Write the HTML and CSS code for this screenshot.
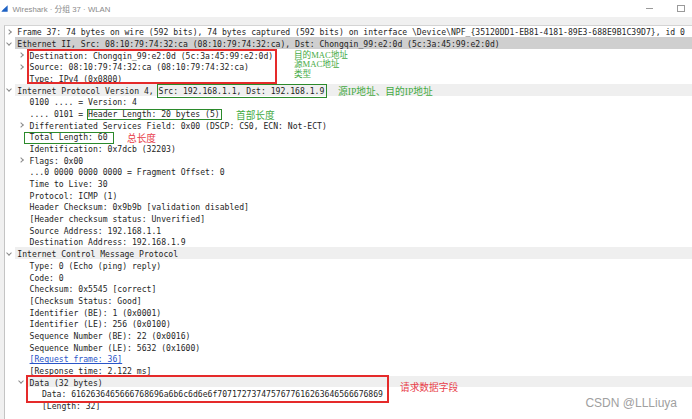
FILE: index.html
```html
<!DOCTYPE html>
<html lang="zh-CN">
<head>
  <meta charset="UTF-8" />
  <meta name="viewport" content="width=device-width, initial-scale=1.0"/>
  <title>Wireshark · 分组 37 · WLAN</title>
  <link rel="stylesheet" href="styles.css">
</head>
<body>
  <div class="titlebar">
    <svg class="logo" viewBox="0 0 10 10"><path d="M0.5 9.5 C3 7 6 3.5 9.5 0.5 L9.5 9.5 Z" fill="#1e62c4"/></svg>
    <span class="title">Wireshark · 分组 37 · WLAN</span>
    <span class="controls"><span class="min"></span><span class="max"></span></span>
  </div>
  <div class="gap"></div>

  <div class="tree">
    <div class="row closed"><span class="tw"></span><span class="label">Frame 37: 74 bytes on wire (592 bits), 74 bytes captured (592 bits) on interface \Device\NPF_{35120DD1-EB81-4181-89E3-688E9B1C39D7}, id 0</span></div>
    <div class="row open sel"><span class="tw"></span><span class="label">Ethernet II, Src: 08:10:79:74:32:ca (08:10:79:74:32:ca), Dst: Chongqin_99:e2:0d (5c:3a:45:99:e2:0d)</span></div>
    <div class="row l1 closed"><span class="tw"></span><span class="label">Destination: Chongqin_99:e2:0d (5c:3a:45:99:e2:0d)</span></div>
    <div class="row l1 closed"><span class="tw"></span><span class="label">Source: 08:10:79:74:32:ca (08:10:79:74:32:ca)</span></div>
    <div class="row l1"><span class="tw"></span><span class="label">Type: IPv4 (0x0800)</span></div>
    <div class="row open hi"><span class="tw"></span><span class="label">Internet Protocol Version 4, Src: 192.168.1.1, Dst: 192.168.1.9</span></div>
    <div class="row l1"><span class="tw"></span><span class="label">0100 .... = Version: 4</span></div>
    <div class="row l1"><span class="tw"></span><span class="label">.... 0101 = Header Length: 20 bytes (5)</span></div>
    <div class="row l1 closed"><span class="tw"></span><span class="label">Differentiated Services Field: 0x00 (DSCP: CS0, ECN: Not-ECT)</span></div>
    <div class="row l1"><span class="tw"></span><span class="label">Total Length: 60</span></div>
    <div class="row l1"><span class="tw"></span><span class="label">Identification: 0x7dcb (32203)</span></div>
    <div class="row l1 closed"><span class="tw"></span><span class="label">Flags: 0x00</span></div>
    <div class="row l1"><span class="tw"></span><span class="label">...0 0000 0000 0000 = Fragment Offset: 0</span></div>
    <div class="row l1"><span class="tw"></span><span class="label">Time to Live: 30</span></div>
    <div class="row l1"><span class="tw"></span><span class="label">Protocol: ICMP (1)</span></div>
    <div class="row l1"><span class="tw"></span><span class="label">Header Checksum: 0x9b9b [validation disabled]</span></div>
    <div class="row l1"><span class="tw"></span><span class="label">[Header checksum status: Unverified]</span></div>
    <div class="row l1"><span class="tw"></span><span class="label">Source Address: 192.168.1.1</span></div>
    <div class="row l1"><span class="tw"></span><span class="label">Destination Address: 192.168.1.9</span></div>
    <div class="row open hi"><span class="tw"></span><span class="label">Internet Control Message Protocol</span></div>
    <div class="row l1"><span class="tw"></span><span class="label">Type: 0 (Echo (ping) reply)</span></div>
    <div class="row l1"><span class="tw"></span><span class="label">Code: 0</span></div>
    <div class="row l1"><span class="tw"></span><span class="label">Checksum: 0x5545 [correct]</span></div>
    <div class="row l1"><span class="tw"></span><span class="label">[Checksum Status: Good]</span></div>
    <div class="row l1"><span class="tw"></span><span class="label">Identifier (BE): 1 (0x0001)</span></div>
    <div class="row l1"><span class="tw"></span><span class="label">Identifier (LE): 256 (0x0100)</span></div>
    <div class="row l1"><span class="tw"></span><span class="label">Sequence Number (BE): 22 (0x0016)</span></div>
    <div class="row l1"><span class="tw"></span><span class="label">Sequence Number (LE): 5632 (0x1600)</span></div>
    <div class="row l1"><span class="tw"></span><span class="label"><a class="link">[Request frame: 36]</a></span></div>
    <div class="row l1"><span class="tw"></span><span class="label">[Response time: 2.122 ms]</span></div>
    <div class="row l1 open hi"><span class="tw"></span><span class="label">Data (32 bytes)</span></div>
    <div class="row l2"><span class="tw"></span><span class="label">Data: 6162636465666768696a6b6c6d6e6f7071727374757677616263646566676869</span></div>
    <div class="row l2"><span class="tw"></span><span class="label">[Length: 32]</span></div>
  </div>

  <!-- 标注 -->
  <div class="box red box-eth"></div>
  <div class="box green box-ip"></div>
  <div class="box green box-hlen"></div>
  <div class="box green box-total"></div>
  <div class="box red box-data"></div>

  <div class="note green note-mac">目的MAC地址<br>源MAC地址<br>类型</div>
  <div class="note green note-ip">源IP地址、目的IP地址</div>
  <div class="note green note-hlen">首部长度</div>
  <div class="note red note-total">总长度</div>
  <div class="note red note-data">请求数据字段</div>

  <div class="watermark">CSDN @LLLiuya</div>
</body>
</html>
```

FILE: styles.css
```css
* {
  box-sizing: border-box;
}

html, body {
  margin: 0;
}

body {
  position: relative;
  width: 692px;
  height: 419px;
  overflow: hidden;
  background-color: #f0f0f0;
  font-family: "DejaVu Sans Mono", monospace;
}

.titlebar {
  display: flex;
  align-items: center;
  height: 17px;
  padding-left: 1px;
  background-color: #ffffff;
}

.logo {
  width: 7px;
  height: 7px;
  margin-right: 4.5px;
}

.title {
  font-family: "Liberation Sans", "Noto Sans CJK SC", sans-serif;
  font-size: 7.8px;
  color: #8a8a8a;
}

.controls {
  display: flex;
  align-items: center;
  margin-left: auto;
}

.min {
  width: 7px;
  height: 1px;
  background-color: #9a9a9a;
  margin-right: 24px;
}

.max {
  width: 8px;
  height: 7px;
  border: 1px solid #9a9a9a;
  margin-right: 7px;
}

.gap {
  height: 7.6px;
}

.tree {
  height: 395px;
  margin-left: 4px;
  background-color: #ffffff;
  border-left: 1px solid #c4c4c4;
  border-top: 1px solid #d4d4d4;
}

.row {
  display: flex;
  height: 11.676px;
  font-size: 8.1px;
  color: #1e1e1e;
  white-space: pre;
}

.l1 {
  padding-left: 12.3px;
}

.l2 {
  padding-left: 24.6px;
}

.tw {
  position: relative;
  flex: 0 0 10.3px;
}

.closed .tw::after,
.open .tw::after {
  content: "";
  position: absolute;
  width: 3px;
  height: 3px;
  border-right: 1px solid #8a8a8a;
  border-bottom: 1px solid #8a8a8a;
}

.closed .tw::after {
  left: 1.5px;
  top: 4.2px;
  transform: rotate(-45deg);
}

.open .tw::after {
  left: 2px;
  top: 3.4px;
  transform: rotate(45deg);
}

/* 字形在行内偏上，往下挪一点 */
.label {
  flex: 1;
  height: 11.676px;
  padding-left: 2px;
  padding-top: 1.8px;
  line-height: 11.676px;
}

.sel .label {
  background-color: #cfcfcf;
}

.hi .label {
  background-color: #efefef;
}

.link {
  color: #2a55c8;
  text-decoration: underline;
}

/* 标注框 */
.box {
  position: absolute;
}

.box.red {
  border: 2px solid #e52a2a;
}

.box.green {
  border: 1.5px solid #2b8a2b;
}

.box-eth {
  left: 27px;
  top: 49px;
  width: 250px;
  height: 35.4px;
}

.box-ip {
  left: 157px;
  top: 84px;
  width: 170px;
  height: 13.8px;
}

.box-hlen {
  left: 87px;
  top: 108.5px;
  width: 135px;
  height: 11.6px;
}

.box-total {
  left: 24px;
  top: 131.5px;
  width: 90px;
  height: 12.4px;
}

.box-data {
  left: 26px;
  top: 375px;
  width: 363px;
  height: 27.5px;
}

.note {
  position: absolute;
  font-family: "Liberation Serif", "Noto Sans CJK SC", serif;
  font-size: 9.7px;
  line-height: 10px;
  white-space: nowrap;
}

.note.green {
  color: #44aa44;
}

.note.red {
  color: #e8404a;
}

.note-mac {
  left: 294px;
  top: 50.5px;
  font-size: 8.6px;
  line-height: 9.5px;
}

.note-ip {
  left: 338px;
  top: 86.5px;
}

.note-hlen {
  left: 236px;
  top: 111px;
  line-height: 9px;
}

.note-total {
  left: 127px;
  top: 134px;
  line-height: 9px;
}

.note-data {
  left: 400px;
  top: 383px;
}

.watermark {
  position: absolute;
  right: 15px;
  top: 395px;
  font-family: "Liberation Sans", sans-serif;
  font-size: 12px;
  line-height: 16px;
  color: #a0a0a0;
}
```
